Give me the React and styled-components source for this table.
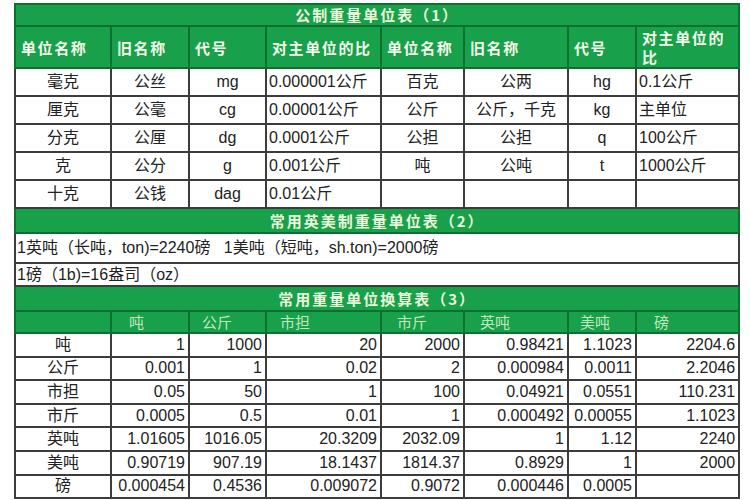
import React from "react";
import styled, { createGlobalStyle } from "styled-components";

const Global = createGlobalStyle`
  html, body { margin: 0; padding: 0; background: #fff; }
  body { width: 750px; height: 500px; overflow: hidden; }
`;

const Page = styled.div`
  padding: 3px 0 0 14px;
`;

const Table = styled.table`
  border-collapse: collapse;
  table-layout: fixed;
  width: 724px;
  font-family: "Liberation Sans", "Noto Sans CJK SC", sans-serif;
  color: #222;
  border: 2px solid #3c3c3c;
`;

const Row = styled.tr`
  height: ${(p) => p.$h}px;
`;

const TitleCell = styled.td`
  background: #18a04a;
  color: #eaf6dc;
  font-family: "Noto Sans CJK SC", sans-serif;
  font-weight: 700;
  font-size: 15px;
  letter-spacing: 2px;
  text-align: center;
  padding: 0;
  border: 2px solid #0d6f30;
  line-height: 18px;
`;

const HeadCell = styled.td`
  background: #18a04a;
  color: #f2fbe9;
  font-family: "Noto Sans CJK SC", sans-serif;
  font-weight: 700;
  font-size: 15px;
  letter-spacing: 1.6px;
  line-height: 19px;
  text-align: left;
  padding: 0 2px 0 5px;
  border: 2px solid #0d6f30;
  word-break: break-all;
`;

const SubHeadCell = styled.td`
  background: #18a04a;
  color: #bfe9bd;
  font-family: "Noto Sans CJK SC", sans-serif;
  font-size: 15px;
  text-align: left;
  padding: 0 0 0 ${(p) => p.$pad || 14}px;
  line-height: 18px;
  border: 2px solid #0d6f30;
`;

const Cell = styled.td`
  border: 2px solid #3c3c3c;
  font-size: 16px;
  line-height: 18px;
  padding: 0 ${(p) => (p.$align === "right" ? 3 : 2)}px;
  text-align: ${(p) => p.$align || "center"};
  white-space: nowrap;
  overflow: hidden;
`;

const NoteCell = styled.td`
  border: 2px solid #3c3c3c;
  font-size: 16px;
  line-height: 18px;
  padding: 0 0 0 1px;
  text-align: left;
  white-space: pre;
`;

const widths = [96, 78, 77, 115, 83, 104, 68, 103];

const metric = [
  ["毫克", "公丝", "mg", "0.000001公斤", "百克", "公两", "hg", "0.1公斤"],
  ["厘克", "公毫", "cg", "0.00001公斤", "公斤", "公斤，千克", "kg", "主单位"],
  ["分克", "公厘", "dg", "0.0001公斤", "公担", "公担", "q", "100公斤"],
  ["克", "公分", "g", "0.001公斤", "吨", "公吨", "t", "1000公斤"],
  ["十克", "公钱", "dag", "0.01公斤", "", "", "", ""],
];

const convHead = ["", "吨", "公斤", "市担", "市斤", "英吨", "美吨", "磅"];
const convPad = [14, 17, 12, 13, 15, 15, 11, 17];

const conv = [
  ["吨", "1", "1000", "20", "2000", "0.98421", "1.1023", "2204.6"],
  ["公斤", "0.001", "1", "0.02", "2", "0.000984", "0.0011", "2.2046"],
  ["市担", "0.05", "50", "1", "100", "0.04921", "0.0551", "110.231"],
  ["市斤", "0.0005", "0.5", "0.01", "1", "0.000492", "0.00055", "1.1023"],
  ["英吨", "1.01605", "1016.05", "20.3209", "2032.09", "1", "1.12", "2240"],
  ["美吨", "0.90719", "907.19", "18.1437", "1814.37", "0.8929", "1", "2000"],
  ["磅", "0.000454", "0.4536", "0.009072", "0.9072", "0.000446", "0.0005", ""],
];

const metricHead = ["单位名称", "旧名称", "代号", "对主单位的比", "单位名称", "旧名称", "代号", "对主单位的比"];

export default function App() {
  return (
    <Page>
      <Global />
      <Table>
        <colgroup>
          {widths.map((w, i) => (
            <col key={i} style={{ width: w }} />
          ))}
        </colgroup>
        <tbody>
          <Row $h={22}>
            <TitleCell colSpan={8}>公制重量单位表（1）</TitleCell>
          </Row>
          <Row $h={42}>
            {metricHead.map((t, i) => (
              <HeadCell key={i}>{t}</HeadCell>
            ))}
          </Row>
          {metric.map((r, ri) => (
            <Row $h={28} key={ri}>
              {r.map((t, i) => (
                <Cell key={i} $align={i === 3 || i === 7 ? "left" : "center"}>
                  {t}
                </Cell>
              ))}
            </Row>
          ))}
          <Row $h={25}>
            <TitleCell colSpan={8}>常用英美制重量单位表（2）</TitleCell>
          </Row>
          <Row $h={30}>
            <NoteCell colSpan={8}>{"1英吨（长吨，ton)=2240磅   1美吨（短吨，sh.ton)=2000磅"}</NoteCell>
          </Row>
          <Row $h={23}>
            <NoteCell colSpan={8}>1磅（1b)=16盎司（oz）</NoteCell>
          </Row>
          <Row $h={25}>
            <TitleCell colSpan={8}>常用重量单位换算表（3）</TitleCell>
          </Row>
          <Row $h={22}>
            {convHead.map((t, i) => (
              <SubHeadCell key={i} $pad={convPad[i]}>{t}</SubHeadCell>
            ))}
          </Row>
          {conv.map((r, ri) => (
            <Row $h={23.6} key={ri}>
              {r.map((t, i) => (
                <Cell key={i} $align={i === 0 ? "center" : "right"}>
                  {t}
                </Cell>
              ))}
            </Row>
          ))}
        </tbody>
      </Table>
    </Page>
  );
}
